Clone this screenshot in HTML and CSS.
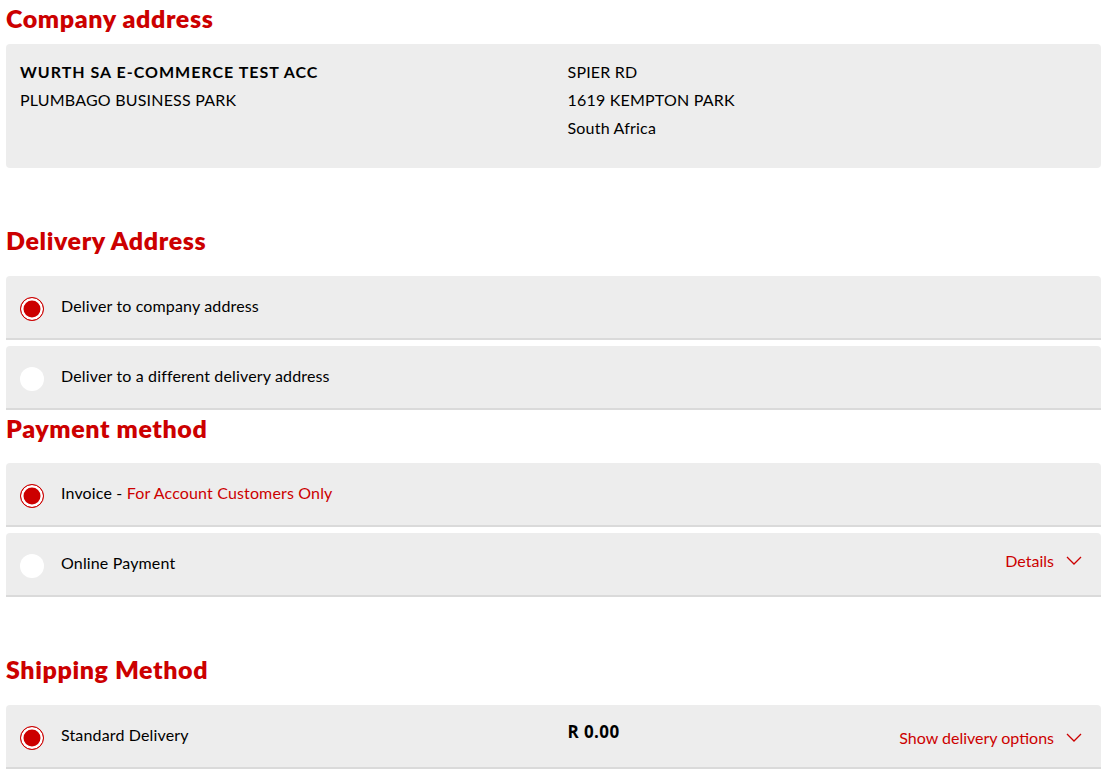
FILE: index.html
```html
<!DOCTYPE html>
<html lang="en">
<head>
    <meta charset="UTF-8">
    <meta name="viewport" content="width=device-width, initial-scale=1.0">
    <title>Checkout</title>
    <link rel="stylesheet" href="styles.css">
</head>
<body>
    <div class="checkout">
        <h2 class="title title--first">Company address</h2>
        <div class="addressbox">
            <div class="addresscol">
                <p class="company">WURTH SA E-COMMERCE TEST ACC</p>
                <p>PLUMBAGO BUSINESS PARK</p>
            </div>
            <div class="addresscol">
                <p>SPIER RD</p>
                <p>1619 KEMPTON PARK</p>
                <p>South Africa</p>
            </div>
        </div>

        <h2 class="title title--spaced">Delivery Address</h2>
        <div class="option">
            <span class="radio checked"></span>
            <span class="label">Deliver to company address</span>
        </div>
        <div class="option option--last">
            <span class="radio"></span>
            <span class="label">Deliver to a different delivery address</span>
        </div>

        <h2 class="title">Payment method</h2>
        <div class="option">
            <span class="radio checked"></span>
            <span class="label">Invoice - <span class="note">For Account Customers Only</span></span>
        </div>
        <div class="option option--last">
            <span class="radio"></span>
            <span class="label">Online Payment</span>
            <a class="toggle" href="#">Details
                <svg width="16" height="9" viewBox="0 0 16 9"><polyline points="1,1 8,8 15,1" fill="none" stroke="#cc0000" stroke-width="1.3"/></svg>
            </a>
        </div>

        <h2 class="title title--spaced">Shipping Method</h2>
        <div class="option option--split option--last">
            <div class="half">
                <span class="radio checked"></span>
                <span class="label">Standard Delivery</span>
            </div>
            <div class="half half--price">
                <span class="price">R 0.00</span>
                <a class="toggle toggle--low" href="#">Show delivery options
                    <svg width="16" height="9" viewBox="0 0 16 9"><polyline points="1,1 8,8 15,1" fill="none" stroke="#cc0000" stroke-width="1.3"/></svg>
                </a>
            </div>
        </div>
    </div>
</body>
</html>
```

FILE: styles.css
```css
body {
    margin: 0;
    padding: 0 6px;
    font-family: 'Lato', sans-serif;
    background: #ffffff;
    color: #000000;
}

.title {
    color: #cc0000;
    font-size: 25px;
    font-weight: 800;
    letter-spacing: 0.6px;
    line-height: 36px;
    margin: 0 0 17px 0;
}

.title--first {
    margin-top: 1px;
    margin-bottom: 9px;
    line-height: 34px;
}

.title--spaced {
    margin-top: 54px;
    margin-bottom: 18px;
}

.addressbox {
    background: #ededed;
    border-radius: 4px;
    display: grid;
    grid-template-columns: 1fr 1fr;
    padding: 14px 0 26px 0;
}

.addresscol {
    padding: 0 14px;
}

.addresscol p {
    margin: 0;
    font-size: 16px;
    line-height: 28px;
    letter-spacing: 0.2px;
}

.addresscol p.company {
    font-weight: 700;
    letter-spacing: 1px;
}

.option {
    background: #ededed;
    border-radius: 4px 4px 0 0;
    border-bottom: 2px solid #dadada;
    height: 62px;
    display: flex;
    align-items: center;
    padding: 0 19px 0 14px;
    margin-bottom: 6px;
}

.option--last {
    margin-bottom: 0;
}

.radio {
    width: 24px;
    height: 24px;
    border-radius: 50%;
    background: #ffffff;
    box-sizing: border-box;
    flex-shrink: 0;
    margin-top: 3px;
}

.radio.checked {
    background: #cc0000;
    border: 1.5px solid #cc0000;
    box-shadow: inset 0 0 0 2.5px #ffffff;
}

.label {
    margin-left: 17px;
    font-size: 16px;
    letter-spacing: 0.15px;
    margin-bottom: 3px;
}

.note {
    color: #cc0000;
}

.toggle {
    margin-left: auto;
    color: #cc0000;
    text-decoration: none;
    font-size: 16px;
    display: flex;
    align-items: center;
    gap: 12px;
    margin-bottom: 7px;
}

.toggle--low {
    margin-bottom: 0;
    margin-top: 2px;
}

.option--split {
    display: grid;
    grid-template-columns: 1fr 1fr;
    padding: 0;
}

.half {
    display: flex;
    align-items: center;
    padding: 0 14px;
}

.half--price {
    padding-right: 19px;
}

.price {
    font-family: 'Open Sans', sans-serif;
    font-weight: 700;
    font-size: 17px;
    letter-spacing: 0.4px;
    margin-bottom: 9px;
}
```
